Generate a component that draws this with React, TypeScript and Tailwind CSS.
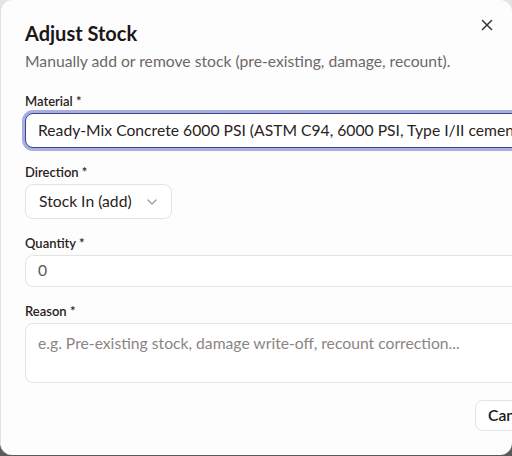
import React from 'react';

const font = { fontFamily: 'Lato, "Noto Sans", sans-serif' };

const App: React.FC = () => {
  return (
    <div className="w-[512px] h-[456px] bg-gradient-to-b from-[#e4e4e4] to-[#5a5a5a]" style={font}>
      <div className="relative w-[512px] h-[455px] overflow-hidden rounded-xl bg-[#fdfdfd] border-l border-[#e2e2e2]">
        {/* Close */}
        <button className="absolute right-[19px] top-[19px] text-[#3b3535]">
          <svg width="12" height="12" viewBox="0 0 12 12" fill="none" stroke="currentColor" strokeWidth="1.5" strokeLinecap="round">
            <path d="M1.5 1.5l9 9M10.5 1.5l-9 9" />
          </svg>
        </button>

        <div className="w-[600px] pl-[24px] pt-[20px]">
          <h2 className="text-[20px] font-bold text-[#1c1616] leading-[26px]">Adjust Stock</h2>
          <p className="mt-[5px] text-[15.7px] text-[#6d6866] leading-[20px]">
            Manually add or remove stock (pre-existing, damage, recount).
          </p>

          {/* Material */}
          <div className="mt-[22px]">
            <label className="block text-[13px] font-semibold text-[#2a2222] leading-[16px]">Material *</label>
            <div className="mt-[4px] h-[35px] flex items-center rounded-lg border-[1.5px] border-[#3a4490] ring-[3px] ring-[#a9aee0] bg-white px-[12px] text-[15.7px] text-[#2a2222] whitespace-nowrap">
              Ready-Mix Concrete 6000 PSI (ASTM C94, 6000 PSI, Type I/II cement)
            </div>
          </div>

          {/* Direction */}
          <div className="mt-[16px]">
            <label className="block text-[13px] font-semibold text-[#2a2222] leading-[16px]">Direction *</label>
            <div className="mt-[4px] h-[35px] w-[147px] flex items-center justify-between rounded-lg border border-[#e5e2e0] bg-white pl-[13px] pr-[14px] text-[15.7px] text-[#2a2222] whitespace-nowrap">
              <span>Stock In (add)</span>
              <svg width="10" height="6" viewBox="0 0 10 6" fill="none" stroke="#9a9593" strokeWidth="1.2" strokeLinecap="round" strokeLinejoin="round">
                <path d="M1 1l4 4 4-4" />
              </svg>
            </div>
          </div>

          {/* Quantity */}
          <div className="mt-[16px]">
            <label className="block text-[13px] font-semibold text-[#2a2222] leading-[16px]">Quantity *</label>
            <div className="mt-[4px] h-[32px] flex items-center rounded-lg border border-[#e5e2e0] bg-white px-[12px] text-[15.7px] text-[#5e5856]">
              0
            </div>
          </div>

          {/* Reason */}
          <div className="mt-[16px]">
            <label className="block text-[13px] font-semibold text-[#2a2222] leading-[16px]">Reason *</label>
            <div className="mt-[4px] h-[60px] rounded-lg border border-[#e5e2e0] bg-white px-[12px] pt-[8px] text-[15.7px] text-[#8a8583]">
              e.g. Pre-existing stock, damage write-off, recount correction...
            </div>
          </div>

          {/* Footer */}
          <div className="mt-[17px] flex">
            <button className="ml-[450px] h-[31px] px-[12px] rounded-lg border border-[#e5e2e0] bg-white text-[15.7px] font-semibold text-[#1c1616]">
              Cancel
            </button>
          </div>
        </div>
      </div>
    </div>
  );
};

export default App;
